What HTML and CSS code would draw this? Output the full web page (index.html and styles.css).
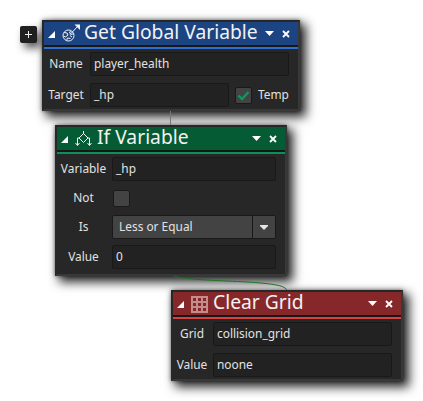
FILE: index.html
```html
<!DOCTYPE html>
<html lang="en">
<head>
<meta charset="utf-8">
<title>Action blocks</title>
<link rel="stylesheet" href="styles.css">
</head>
<body>
<main class="canvas">
  <button class="add" aria-label="Add"><svg width="17" height="17" viewBox="0 0 17 17"><path d="M5 8.500h7M8.500 5v7"/></svg></button>

  <section class="node node-get">
    <header class="head">
      <svg class="fold" width="7" height="7" viewBox="0 0 7 7"><path d="M7 0v7H0z"/></svg>
      <svg class="icon icon-get" width="18" height="18" viewBox="0 0 18 18"><circle cx="6.500" cy="11.500" r="5.500"/><path d="M2 8.500l3 .5 1 2-2.500 2-2-1M8.500 7l-1 2 2 1.500 2-1M4.500 16.500l1-2.500 3 .5M8 10.500L16 2M10 13l-2-1.500"/><path class="tip" d="M12.500 0.500H18V6z"/></svg>
      <h2 class="title">Get Global Variable</h2>
      <svg class="menu" width="9" height="5" viewBox="0 0 9 5"><path d="M0 0h9L4.500 5z"/></svg>
      <svg class="close" width="8" height="8" viewBox="0 0 8 8"><path d="M1 1l6 6M7 1L1 7"/></svg>
    </header>
    <div class="stripe"></div>
    <div class="body">
      <div class="row"><span class="label">Name</span><span class="field">player_health</span></div>
      <div class="row"><span class="label">Target</span><span class="field target">_hp</span><span class="check"><svg width="13" height="11" viewBox="0 0 13 11"><path d="M1.500 5.500l3.500 3.500L11.500 2"/></svg></span><span class="temp">Temp</span></div>
    </div>
  </section>

  <section class="node node-if">
    <header class="head">
      <svg class="fold" width="7" height="7" viewBox="0 0 7 7"><path d="M7 0v7H0z"/></svg>
      <svg class="icon icon-if" width="17" height="18" viewBox="0 0 17 18"><path d="M8.500 1v3M8.500 3.500L13 8l-4.500 4.500L4 8zM4 8H2.500v7M13 8h1.500v7M.5 13l2 2.500 2-2.500M12.500 13l2 2.500 2-2.500"/></svg>
      <h2 class="title">If Variable</h2>
      <svg class="menu" width="9" height="5" viewBox="0 0 9 5"><path d="M0 0h9L4.500 5z"/></svg>
      <svg class="close" width="8" height="8" viewBox="0 0 8 8"><path d="M1 1l6 6M7 1L1 7"/></svg>
    </header>
    <div class="stripe"></div>
    <div class="body">
      <div class="row"><span class="label">Variable</span><span class="field">_hp</span></div>
      <div class="row"><span class="label">Not</span><span class="check"></span></div>
      <div class="row"><span class="label">Is</span><span class="select"><span class="choice">Less or Equal</span><span class="drop"><svg width="8" height="5" viewBox="0 0 8 5"><path d="M0 0h8v1L4 5 0 1z"/></svg></span></span></div>
      <div class="row"><span class="label">Value</span><span class="field">0</span></div>
    </div>
  </section>

  <section class="node node-clear">
    <header class="head">
      <svg class="fold" width="7" height="7" viewBox="0 0 7 7"><path d="M7 0v7H0z"/></svg>
      <svg class="icon icon-grid" width="17" height="17" viewBox="0 0 17 17"><path d="M0 1h17M0 6h17M0 11h17M0 16h17M1 0v17M6 0v17M11 0v17M16 0v17"/></svg>
      <h2 class="title">Clear Grid</h2>
      <svg class="menu" width="9" height="5" viewBox="0 0 9 5"><path d="M0 0h9L4.500 5z"/></svg>
      <svg class="close" width="8" height="8" viewBox="0 0 8 8"><path d="M1 1l6 6M7 1L1 7"/></svg>
    </header>
    <div class="stripe"></div>
    <div class="body">
      <div class="row"><span class="label">Grid</span><span class="field">collision_grid</span></div>
      <div class="row"><span class="label">Value</span><span class="field">noone</span></div>
    </div>
  </section>

  <svg class="wires" width="423" height="401" viewBox="0 0 423 401"><path class="wire-a" d="M170.500 111v14"/><path class="wire-b" d="M174 276C195 283 285 279 286.500 290"/></svg>
</main>
</body>
</html>
```
FILE: styles.css
```css
* { box-sizing: border-box; }
body { margin: 0; background: #fff; font-family: "Noto Sans", "Open Sans", sans-serif; }
.canvas { position: relative; width: 423px; height: 401px; overflow: hidden; }
svg { display: block; flex: none; }

.add {
  position: absolute; left: 20px; top: 26px; width: 17px; height: 17px;
  padding: 0; border: 0; border-radius: 2px; background: #202020;
  box-shadow: 4px 5px 8px rgba(0, 0, 0, .65);
}
.add path { stroke: #eee; fill: none; }

.node {
  position: absolute; border: 2px solid #272727; background: #272727;
  border-right-color: #383838; border-bottom-color: #383838;
  box-shadow: 5px 5px 10px 1px rgba(0, 0, 0, .85), 0 0 4px rgba(0, 0, 0, .5);
}
.node-get { left: 42px; top: 20px; width: 258px; height: 91px; --head: #1d4482; --line: #2e6fd0; --label: 46px; }
.node-if { left: 55px; top: 125px; width: 232px; height: 151px; --head: #055b34; --line: #0b9058; --label: 55px; }
.node-clear { left: 171px; top: 290px; width: 232px; height: 91px; --head: #86282a; --line: #d94040; --label: 40px; }

.head {
  display: flex; align-items: center; height: 25px; padding: 0 8px 0 4px;
  background: var(--head); border-bottom: 2px solid #181818;
}
.fold, .menu { fill: #fff; }
.fold { margin-top: 1px; }
.icon { margin-left: 7px; fill: none; stroke: #f4f4f4; }
.icon-get { margin-top: -1px; }
.icon-get .tip { fill: #f4f4f4; stroke: none; }
.icon-if { margin-right: 1px; }
.icon-grid { stroke: #c68c8c; stroke-width: 2; margin: 2px 1px 0 7px; }
.title {
  flex: 1; margin: 0 0 4px 4px; font-size: 19.3px; font-weight: 400;
  line-height: 22px; color: #f2f2f2; white-space: nowrap;
}
.close { margin-left: 8px; stroke: #fff; stroke-width: 1.8; fill: none; }
.stripe { height: 2px; background: var(--line); }

.body { display: flex; flex-direction: column; gap: 7px; padding: 3px 9px 0 0; }
.node-if .body { gap: 6px; }
.row { display: flex; align-items: center; height: 24px; font-size: 11.9px; color: #e2e2e2; }
.node-if .row:nth-child(2) { height: 22px; }
.label { width: var(--label); margin-bottom: 2px; padding-right: 2px; line-height: 20px; text-align: center; }
.field {
  flex: 1; height: 24px; padding-left: 3px; line-height: 21px;
  border: 1px solid #191919; border-radius: 2px; background: #222;
}
.target { flex: none; width: 139px; }
.check {
  display: flex; align-items: center; justify-content: center;
  width: 17px; height: 17px; border: 1px solid #191919; border-radius: 2px; background: #434343;
}
.node-get .check { margin-left: 6px; }
.node-if .check { margin-left: 1px; }
.check path { fill: none; stroke: #0b9a60; stroke-width: 2.4; }
.temp { margin: 0 0 2px 6px; line-height: 20px; }
.select {
  display: flex; flex: 1; height: 24px; line-height: 21px;
  border: 1px solid #191919; border-radius: 2px; background: #434343;
}
.choice { flex: 1; padding-left: 6px; }
.drop { display: flex; align-items: center; justify-content: center; width: 23px; border-left: 1px solid #191919; }
.drop path { fill: #e6e6e6; }

.wires { position: absolute; left: 0; top: 0; pointer-events: none; }
.wires path { fill: none; }
.wire-a { stroke: #777; }
.wire-b { stroke: #1b7426; }
```
